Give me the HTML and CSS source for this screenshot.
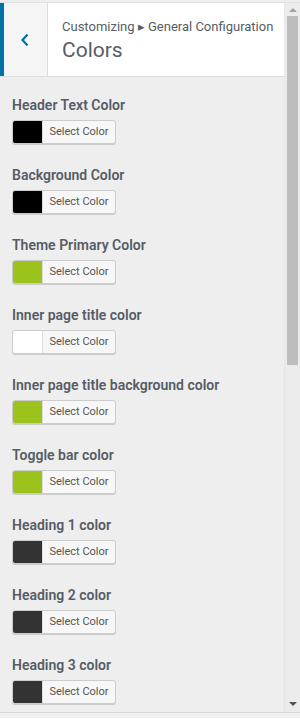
FILE: index.html
```html
<!DOCTYPE html>
<html lang="en">
<head>
    <meta charset="UTF-8">
    <meta name="viewport" content="width=device-width, initial-scale=1.0">
    <title>Colors</title>
    <link rel="stylesheet" href="styles.css">
</head>
<body>
    <div class="frame">
        <div class="pane">
            <div class="scroller">
                <!-- Section header -->
                <div class="section-head">
                    <button class="back" aria-label="Back">
                        <svg width="10" height="14" viewBox="0 0 10 14"><path d="M7.5 1.5 L2.5 7 L7.5 12.5" fill="none" stroke="#0073aa" stroke-width="2.2"/></svg>
                    </button>
                    <div class="title">
                        <span class="crumb">Customizing &#9656; General Configuration</span>
                        <h3>Colors</h3>
                    </div>
                </div>

                <ul class="controls">
                    <li><span class="label">Header Text Color</span><button class="picker"><span class="swatch black"></span><span class="pick-text">Select Color</span></button></li>
                    <li><span class="label">Background Color</span><button class="picker"><span class="swatch black"></span><span class="pick-text">Select Color</span></button></li>
                    <li><span class="label">Theme Primary Color</span><button class="picker"><span class="swatch green"></span><span class="pick-text">Select Color</span></button></li>
                    <li><span class="label">Inner page title color</span><button class="picker"><span class="swatch white"></span><span class="pick-text">Select Color</span></button></li>
                    <li><span class="label">Inner page title background color</span><button class="picker"><span class="swatch green"></span><span class="pick-text">Select Color</span></button></li>
                    <li><span class="label">Toggle bar color</span><button class="picker"><span class="swatch green"></span><span class="pick-text">Select Color</span></button></li>
                    <li><span class="label">Heading 1 color</span><button class="picker"><span class="swatch dark"></span><span class="pick-text">Select Color</span></button></li>
                    <li><span class="label">Heading 2 color</span><button class="picker"><span class="swatch dark"></span><span class="pick-text">Select Color</span></button></li>
                    <li><span class="label">Heading 3 color</span><button class="picker"><span class="swatch dark"></span><span class="pick-text">Select Color</span></button></li>
                </ul>
            </div>

            <!-- fake scrollbar -->
            <div class="scrollbar">
                <span class="arrow up"></span>
                <div class="track"><div class="thumb"></div></div>
                <span class="arrow down"></span>
            </div>
        </div>
        <div class="footer-strip"></div>
    </div>
</body>
</html>
```

FILE: styles.css
```css
*, *::before, *::after {
    margin: 0;
    padding: 0;
    box-sizing: border-box;
}

body {
    font-family: Roboto, "Liberation Sans", sans-serif;
    background: #eeeeee;
    color: #555d66;
    width: 300px;
    height: 718px;
    overflow: hidden;
}

.frame {
    display: flex;
    flex-direction: column;
    height: 718px;
    padding-top: 2px;
}

.pane {
    display: flex;
    height: 711px;
    border-top: 1px solid #e0e0e0;
    border-bottom: 1px solid #d8d8d8;
    overflow: hidden;
}

.scroller {
    width: 284px;
    overflow: hidden;
}

.section-head {
    display: flex;
    height: 74px;
    background: #fff;
    border-bottom: 1px solid #dddddd;
}

.back {
    width: 48px;
    background: #f5f5f5;
    border: none;
    border-left: 4px solid #0073aa;
    border-right: 1px solid #dddddd;
    display: flex;
    align-items: center;
    justify-content: center;
    padding-right: 2px;
}

.title {
    padding: 14px 0 0 14px;
    display: flex;
    flex-direction: column;
}

.crumb {
    font-size: 13px;
    line-height: 20px;
    color: #555d66;
    white-space: nowrap;
}

.title h3 {
    font-size: 21px;
    font-weight: 400;
    line-height: 26px;
    margin-top: 0;
    color: #555d66;
}

.controls {
    list-style: none;
    padding: 18px 0 0 12px;
}

.controls li {
    display: flex;
    flex-direction: column;
    align-items: flex-start;
    margin-bottom: 21px;
}

.label {
    font-size: 14px;
    font-weight: 600;
    line-height: 20px;
    color: #555d66;
    white-space: nowrap;
    margin-bottom: 5px;
}

.picker {
    display: flex;
    height: 24px;
    width: 104px;
    border: 1px solid #cccccc;
    border-radius: 3px;
    background: #f7f7f7;
    overflow: hidden;
    box-shadow: 0 1px 0 #cccccc;
}

.swatch {
    width: 30px;
    height: 100%;
    border-right: 1px solid #dddddd;
}

.swatch.black { background: #000000; }
.swatch.green { background: #9bc31b; }
.swatch.white { background: #ffffff; }
.swatch.dark  { background: #333333; }

.pick-text {
    flex: 1;
    font-family: Roboto, "Liberation Sans", sans-serif;
    font-size: 11px;
    line-height: 22px;
    color: #555555;
    text-align: center;
}

.scrollbar {
    width: 16px;
    display: flex;
    flex-direction: column;
    align-items: center;
    background: #ececec;
    border-left: 1px solid #e6e6e6;
}

.arrow {
    width: 0;
    height: 0;
    border-left: 4px solid transparent;
    border-right: 4px solid transparent;
}

.arrow.up {
    margin-top: 5px;
    border-bottom: 4px solid #a3a3a3;
}

.arrow.down {
    margin-bottom: 6px;
    border-top: 4px solid #505050;
}

.track {
    flex: 1;
    width: 100%;
    padding: 4px 2px 0 2px;
}

.thumb {
    height: 349px;
    background: #bdbdbd;
}

.footer-strip {
    flex: 1;
    background: #f0f0f0;
}
```
